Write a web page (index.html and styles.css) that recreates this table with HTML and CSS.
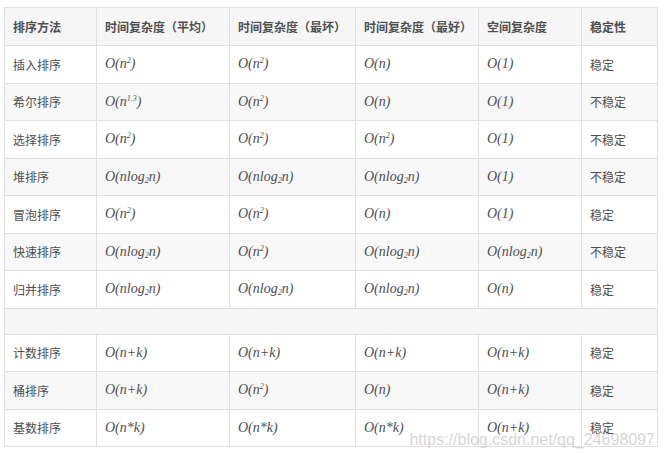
FILE: index.html
```html
<!DOCTYPE html>
<html lang="zh">
<head>
<meta charset="utf-8">
<link rel="stylesheet" href="styles.css">
</head>
<body>
<div class="wrap">
<table class="sort">
  <colgroup>
    <col class="c1"><col class="c2"><col class="c3"><col class="c4"><col class="c5"><col class="c6">
  </colgroup>
  <thead>
    <tr><th>排序方法</th><th>时间复杂度（平均）</th><th>时间复杂度（最坏）</th><th>时间复杂度（最好）</th><th>空间复杂度</th><th>稳定性</th></tr>
  </thead>
  <tbody>
    <tr><td>插入排序</td><td class="m">O(n<sup>2</sup>)</td><td class="m">O(n<sup>2</sup>)</td><td class="m">O(n)</td><td class="m">O(1)</td><td>稳定</td></tr>
    <tr><td>希尔排序</td><td class="m">O(n<sup>1.3</sup>)</td><td class="m">O(n<sup>2</sup>)</td><td class="m">O(n)</td><td class="m">O(1)</td><td>不稳定</td></tr>
    <tr><td>选择排序</td><td class="m">O(n<sup>2</sup>)</td><td class="m">O(n<sup>2</sup>)</td><td class="m">O(n<sup>2</sup>)</td><td class="m">O(1)</td><td>不稳定</td></tr>
    <tr><td>堆排序</td><td class="m">O(nlog<sub>2</sub>n)</td><td class="m">O(nlog<sub>2</sub>n)</td><td class="m">O(nlog<sub>2</sub>n)</td><td class="m">O(1)</td><td>不稳定</td></tr>
    <tr><td>冒泡排序</td><td class="m">O(n<sup>2</sup>)</td><td class="m">O(n<sup>2</sup>)</td><td class="m">O(n)</td><td class="m">O(1)</td><td>稳定</td></tr>
    <tr><td>快速排序</td><td class="m">O(nlog<sub>2</sub>n)</td><td class="m">O(n<sup>2</sup>)</td><td class="m">O(nlog<sub>2</sub>n)</td><td class="m">O(nlog<sub>2</sub>n)</td><td>不稳定</td></tr>
    <tr><td>归并排序</td><td class="m">O(nlog<sub>2</sub>n)</td><td class="m">O(nlog<sub>2</sub>n)</td><td class="m">O(nlog<sub>2</sub>n)</td><td class="m">O(n)</td><td>稳定</td></tr>
    <tr class="gap"><td colspan="6"></td></tr>
    <tr><td>计数排序</td><td class="m">O(n+k)</td><td class="m">O(n+k)</td><td class="m">O(n+k)</td><td class="m">O(n+k)</td><td>稳定</td></tr>
    <tr><td>桶排序</td><td class="m">O(n+k)</td><td class="m">O(n<sup>2</sup>)</td><td class="m">O(n)</td><td class="m">O(n+k)</td><td>稳定</td></tr>
    <tr><td>基数排序</td><td class="m">O(n*k)</td><td class="m">O(n*k)</td><td class="m">O(n*k)</td><td class="m">O(n+k)</td><td>稳定</td></tr>
  </tbody>
</table>
<div class="watermark">https://blog.csdn.net/qq_24698097</div>
</div>
</body>
</html>
```
FILE: styles.css
```css
html, body {
  margin: 0;
  padding: 0;
  background: #ffffff;
}
body {
  padding: 7px 4px;
  font-family: "Noto Sans CJK SC", "Noto Sans", sans-serif;
  color: #4d4d4d;
  font-size: 12px;
}
.wrap {
  position: relative;
  width: 653px;
}
.sort {
  border-collapse: collapse;
  table-layout: fixed;
  width: 653px;
}
.c1 { width: 92px; }
.c2 { width: 133px; }
.c3 { width: 126px; }
.c4 { width: 123px; }
.c5 { width: 103px; }
.c6 { width: 76px; }
.sort th, .sort td {
  border: 1px solid #e0e0e0;
  padding: 0 8px;
  text-align: left;
  vertical-align: middle;
  white-space: nowrap;
}
.sort th {
  height: 37px;
  font-weight: bold;
  color: #4f4f4f;
  background: #f6f6f6;
}
.sort td {
  height: 36.5px;
}
.sort tbody tr:nth-child(even) td {
  background: #f8f8f8;
}
.sort tbody tr.gap td {
  height: 25px;
  background: #f6f6f6;
}
.m {
  font-family: "Liberation Serif", "DejaVu Serif", serif;
  font-style: italic;
  font-size: 14px;
  color: #4d4d4d;
}
.m sup, .m sub {
  font-size: 8px;
  line-height: 0;
}
.m sup { vertical-align: 5px; }
.m sub { vertical-align: -2px; }
.watermark {
  position: absolute;
  right: 2px;
  bottom: -2px;
  font-family: "Liberation Sans", Arial, sans-serif;
  font-size: 16px;
  color: rgba(195, 195, 195, 0.7);
  pointer-events: none;
}
```
